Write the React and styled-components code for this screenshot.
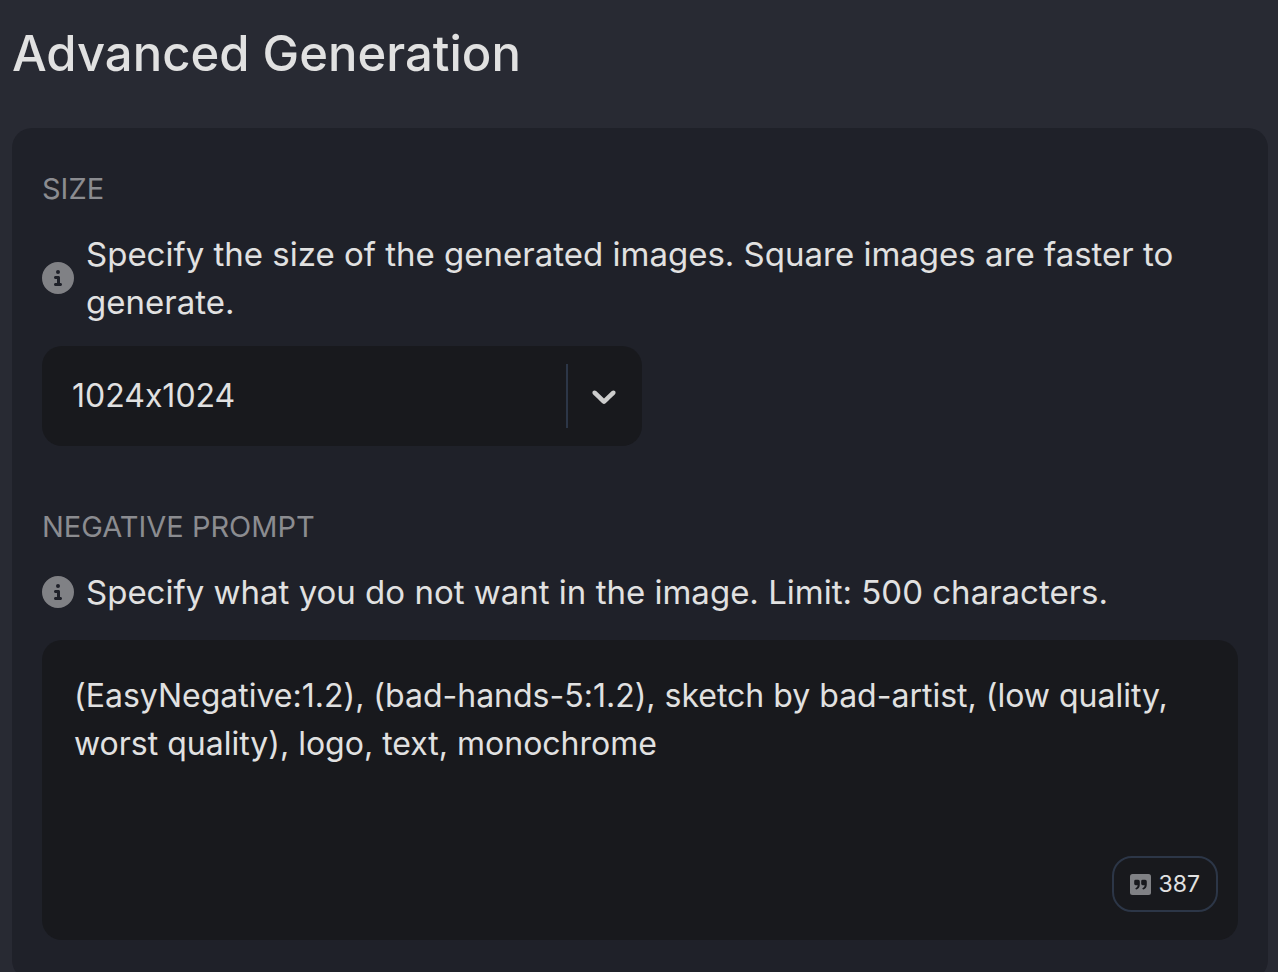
import React, { useState } from "react";
import styled, { createGlobalStyle } from "styled-components";
import { FaCircleInfo } from "react-icons/fa6";

const GlobalStyle = createGlobalStyle`
  *, *::before, *::after { box-sizing: border-box; }
  body {
    margin: 0;
    background: #282a33;
    color: #e1e1e1;
    font-family: "Inter", "Open Sans", sans-serif;
    font-feature-settings: "calt" 0;
    font-size: 32px;
    line-height: 48px;
  }
`;

const Page = styled.main`
  height: 100vh;
  overflow: hidden;
  padding: 24px 10px 0 12px;
`;

const Title = styled.h1`
  margin: 0 0 44px;
  font-size: 49px;
  line-height: 60px;
  font-weight: 500;
`;

const Card = styled.section`
  display: flex;
  flex-direction: column;
  gap: 60px;
  padding: 40px 30px;
  border-radius: 20px;
  background: #1f2129;
`;

const Field = styled.div`
  display: flex;
  flex-direction: column;
`;

const Label = styled.label`
  margin-bottom: 20px;
  color: #8b8c90;
  font-size: 29px;
  line-height: 42px;
  text-transform: uppercase;
`;

const Hint = styled.p`
  display: flex;
  align-items: center;
  gap: 12px;
  margin: 0 0 20px;
  font-size: 33px;
`;

const InfoIcon = styled(FaCircleInfo)`
  flex: none;
  width: 32px;
  height: 32px;
  color: #808185;
`;

const SelectBox = styled.div`
  position: relative;
  width: 100%;
  max-width: 600px;
`;

const Select = styled.select`
  display: block;
  width: 100%;
  height: 100px;
  padding: 0 76px 0 30px;
  border: 0;
  border-radius: 20px;
  outline: 0;
  appearance: none;
  background: #18191d;
  color: inherit;
  font: inherit;
  font-feature-settings: inherit;
`;

const Indicator = styled.span`
  position: absolute;
  inset: 18px 18px 18px auto;
  display: flex;
  align-items: center;
  padding-left: 16px;
  border-left: 2px solid #2c3647;
  color: #cccccc;
  pointer-events: none;
`;

const PromptBox = styled.div`
  position: relative;
  margin-top: 4px;
`;

const TextArea = styled.textarea`
  display: block;
  width: 100%;
  height: 300px;
  padding: 32px;
  border: 0;
  border-radius: 20px;
  outline: 0;
  resize: none;
  background: #18191d;
  color: inherit;
  font: inherit;
  font-feature-settings: inherit;
`;

const Counter = styled.output`
  position: absolute;
  right: 20px;
  bottom: 28px;
  display: flex;
  align-items: center;
  gap: 8px;
  height: 56px;
  padding: 0 16px;
  border: 2px solid #2c3647;
  border-radius: 20px;
  background: #18191d;
  font-size: 23px;
  line-height: 36px;
`;

function Chevron() {
  return (
    <svg width="40" height="40" viewBox="0 0 20 20" fill="currentColor" aria-hidden="true">
      <path d="M4.516 7.548c0.436-0.446 1.043-0.481 1.576 0l3.908 3.747 3.908-3.747c0.533-0.481 1.141-0.446 1.574 0 0.436 0.445 0.408 1.197 0 1.615-0.406 0.418-4.695 4.502-4.695 4.502-0.217 0.223-0.502 0.335-0.787 0.335s-0.57-0.112-0.789-0.335c0 0-4.287-4.084-4.695-4.502s-0.436-1.17 0-1.615z" />
    </svg>
  );
}

const QUOTE_MARK =
  "M5.6 5.8H8.2Q9.8 5.8 9.8 7.4V10.2Q9.8 14.6 6.4 15.4Q5.3 15.5 5.3 14.6Q5.4 14 6.2 13.7Q7.5 13.1 7.7 11.2H5.6Q4.2 11.2 4.2 9.8V7.2Q4.2 5.8 5.6 5.8Z";

function QuoteIcon() {
  return (
    <svg width="21" height="21" viewBox="0 0 21 21" aria-hidden="true">
      <rect width="21" height="21" rx="2.5" fill="#808185" />
      <path fill="#18191d" d={QUOTE_MARK} />
      <path fill="#18191d" d={QUOTE_MARK} transform="translate(7 0)" />
    </svg>
  );
}

const SIZES = ["1024x1024", "768x1024", "1024x768"];
const INITIAL_PROMPT =
  "(EasyNegative:1.2), (bad-hands-5:1.2), sketch by bad-artist, (low quality, worst quality), logo, text, monochrome";
const INITIAL_REMAINING = 387;

export default function App() {
  const [size, setSize] = useState(SIZES[0]);
  const [prompt, setPrompt] = useState(INITIAL_PROMPT);
  const remaining = INITIAL_REMAINING + INITIAL_PROMPT.length - prompt.length;

  return (
    <>
      <GlobalStyle />
      <Page>
        <Title>Advanced Generation</Title>
        <Card>
          <Field>
            <Label htmlFor="size">Size</Label>
            <Hint>
              <InfoIcon aria-hidden="true" />
              <span>Specify the size of the generated images. Square images are faster to generate.</span>
            </Hint>
            <SelectBox>
              <Select id="size" value={size} onChange={(e) => setSize(e.target.value)}>
                {SIZES.map((s) => (
                  <option key={s}>{s}</option>
                ))}
              </Select>
              <Indicator>
                <Chevron />
              </Indicator>
            </SelectBox>
          </Field>
          <Field>
            <Label htmlFor="negative-prompt">Negative prompt</Label>
            <Hint>
              <InfoIcon aria-hidden="true" />
              <span>Specify what you do not want in the image. Limit: 500 characters.</span>
            </Hint>
            <PromptBox>
              <TextArea
                id="negative-prompt"
                spellCheck={false}
                value={prompt}
                onChange={(e) => setPrompt(e.target.value)}
              />
              <Counter htmlFor="negative-prompt">
                <QuoteIcon />
                {remaining}
              </Counter>
            </PromptBox>
          </Field>
        </Card>
      </Page>
    </>
  );
}
